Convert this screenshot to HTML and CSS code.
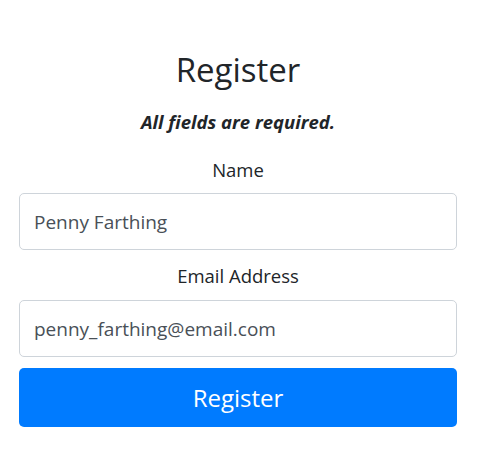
FILE: index.html
```html
<!DOCTYPE html>
<html lang="en">
<head>
<meta charset="utf-8">
<title>Register</title>
<link rel="stylesheet" href="styles.css">
</head>
<body>
<main class="page">
  <form class="register-form">
    <h2 class="title">Register</h2>
    <p class="note">All fields are required.</p>
    <div class="field">
      <label class="label" for="name">Name</label>
      <input class="input" id="name" type="text" value="Penny Farthing">
    </div>
    <div class="field">
      <label class="label" for="email">Email Address</label>
      <input class="input" id="email" type="email" value="penny_farthing@email.com">
    </div>
    <button class="btn" type="button">Register</button>
  </form>
</main>
</body>
</html>
```
FILE: styles.css
```css
* { box-sizing: border-box; }
html, body { margin: 0; padding: 0; background: #fff; }
body {
  font-family: "Open Sans", "Noto Sans", sans-serif;
  color: #212529;
}
.page {
  padding: 50px 22px 0 19px;
}
.register-form {
  display: flex;
  flex-direction: column;
  text-align: center;
}
.title {
  margin: 0;
  font-size: 33px;
  font-weight: 400;
  line-height: 40px;
}
.note {
  margin: 20px 0 0;
  font-size: 18.5px;
  font-weight: 700;
  font-style: italic;
  line-height: 24px;
}
.field {
  display: flex;
  flex-direction: column;
  gap: 11px;
  margin-top: 24px;
}
.field + .field { margin-top: 14px; gap: 12px; }
.label {
  font-size: 18.5px;
  line-height: 24px;
}
.input {
  height: 57px;
  padding: 0 14px;
  border: 1px solid #ced4da;
  border-radius: 5px;
  font-family: inherit;
  font-size: 19px;
  color: #495057;
  background: #fff;
}
.btn {
  margin-top: 11px;
  height: 59px;
  border: 0;
  border-radius: 5px;
  background: #007bff;
  color: #fff;
  font-family: inherit;
  font-size: 24px;
}
```
